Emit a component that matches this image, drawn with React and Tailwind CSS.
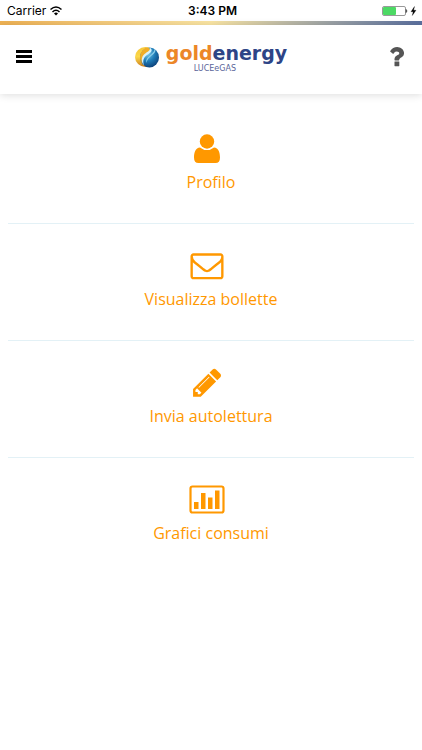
import React from "react";

function WifiIcon() {
  return (
    <svg className="h-3 w-3" viewBox="0 0 24 22" fill="none" stroke="#000" strokeWidth="3" aria-hidden="true">
      <path d="M1 8Q12-2 23 8M5 13Q12 6 19 13" />
      <path d="M8 16Q12 12 16 16L12 20Z" fill="#000" stroke="none" />
    </svg>
  );
}

function BatteryIcon() {
  return (
    <svg className="h-3 w-9" viewBox="0 0 36 12" aria-hidden="true">
      <rect x="0.5" y="1.5" width="23" height="9" rx="1.5" fill="#fff" stroke="#999" />
      <rect x="1" y="2" width="13" height="8" rx="1" fill="#4cd964" />
      <path d="M24 4.5q2 1.5 0 3z" fill="#555" stroke="#555" />
      <path d="M32.500 1.500L29 6.700h2.200L30.300 10.500L34 5.300h-2.400z" fill="#000" stroke="#000" strokeWidth="0.3" />
    </svg>
  );
}

function StatusBar() {
  return (
    <div className="grid h-[21px] grid-cols-3 items-center pt-px pr-1 pl-[7px] font-['Inter',sans-serif] text-xs leading-4 text-black">
      <div className="flex items-center gap-1">
        <span>Carrier</span>
        <WifiIcon />
      </div>
      <div className="text-center font-semibold">3:43 PM</div>
      <div className="flex justify-end">
        <BatteryIcon />
      </div>
    </div>
  );
}

function Globe() {
  return (
    <svg className="h-6 w-6" viewBox="0 0 24 24" aria-hidden="true">
      <defs>
        <linearGradient id="sun" x1="0.4" y1="0" x2="0.5" y2="1">
          <stop offset="0" stopColor="#f6c638" />
          <stop offset="0.45" stopColor="#fbd84a" />
          <stop offset="1" stopColor="#c9781a" />
        </linearGradient>
        <radialGradient id="sea" cx="0.4" cy="0.3" r="0.75">
          <stop offset="0" stopColor="#7fcdea" />
          <stop offset="0.5" stopColor="#1f7db8" />
          <stop offset="1" stopColor="#0b3c74" />
        </radialGradient>
      </defs>
      <ellipse cx="10.500" cy="12" rx="10.500" ry="10" fill="url(#sun)" />
      <ellipse cx="14.500" cy="12.500" rx="9.500" ry="10" fill="url(#sea)" />
      <path d="M12 2.500C16 3 16 6 12 8.500C8 11 6 14 7 18.500C4.500 15 4.500 10 6.500 7C8 4.500 10 3 12 2.500Z" fill="#f0ad26" />
      <path d="M14.500 2.500C19 5 15.500 8 12 10C8.500 12.500 7.500 16 9 20.500C6 17 6 12 9.500 9C12.500 6.500 16 5.500 14.500 2.500Z" fill="#d9f1f8" />
      <path d="M20.500 5C20.500 10 12.500 11 11.500 18C9.500 11.500 19.500 9.500 19.500 4Z" fill="#8cd0ea" />
    </svg>
  );
}

function Logo() {
  return (
    <a href="#home" aria-label="goldenergy LUCEeGAS" className="flex items-center gap-[7px]">
      <Globe />
      <span className="flex flex-col items-start font-['DejaVu_Sans',sans-serif]">
        <span className="text-[19px] leading-6 font-bold text-[#2d4486]">
          <span className="text-[#ec8727]">gold</span>energy
        </span>
        <span className="pl-7 text-[8px] leading-2 text-[#5a6499]">LUCEeGAS</span>
      </span>
    </a>
  );
}

function Header() {
  return (
    <header className="flex h-[69px] items-center justify-between bg-white px-4 pb-[5px] shadow-[0_1px_8px_rgba(0,0,0,0.14)]">
      <button type="button" aria-label="Menu" className="flex h-8 w-8 items-center">
        <svg className="h-4 w-4" viewBox="0 0 16 16" aria-hidden="true">
          <path d="M0 1h16v3H0zM0 6h16v3H0zM0 11h16v3H0z" fill="#000" />
        </svg>
      </button>
      <Logo />
      <button type="button" aria-label="Aiuto" className="flex h-8 w-8 items-center justify-end">
        <svg className="h-6 w-5" viewBox="328 120 1080 1600" aria-hidden="true">
          <path
            fill="#555"
            d="M1088 1256v240q0 16-12 28t-28 12h-240q-16 0-28-12t-12-28v-240q0-16 12-28t28-12h240q16 0 28 12t12 28zm316-600q0 54-15.500 101t-35 76.500-55 59.500-57.500 43.500-61 35.500q-41 23-68.500 65t-27.500 67q0 17-12 32.500t-28 15.500h-240q-15 0-25.500-18.500t-10.500-37.500v-45q0-83 65-156.500t143-108.500q59-27 84-56t25-76q0-42-46.500-74t-107.500-32q-65 0-108 29-35 25-107 115-13 16-31 16-12 0-25-8l-164-125q-13-10-15.500-25t5.500-28q160-266 464-266 80 0 161 31t146 83 106 127.500 41 158.500z"
          />
        </svg>
      </button>
    </header>
  );
}

function UserIcon() {
  return (
    <svg className="h-8 w-9" viewBox="0 2 36 32" fill="currentColor" aria-hidden="true">
      <circle cx="18" cy="9.500" r="7.200" />
      <path d="M11 15.400C6.500 15.500 5 20.500 5 25.500Q5 31 9.500 31H26.500Q31 31 31 25.500C31 20.500 29.500 15.500 25 15.400Q18 20.800 11 15.400Z" />
    </svg>
  );
}

function EnvelopeIcon() {
  return (
    <svg className="h-8 w-9" viewBox="-80 128 1952 1736" fill="currentColor" aria-hidden="true">
      <path d="M1664 1504v-768q-32 36-69 66-268 206-426 338-51 43-83 67t-86.500 48.500-102.500 24.500h-2q-48 0-102.500-24.500t-86.500-48.500-83-67q-158-132-426-338-37-30-69-66v768q0 13 9.500 22.500t22.500 9.500h1472q13 0 22.500-9.500t9.500-22.500zm0-1051v-24.500l-.5-13-3-12.500-5.500-9-9-7.500-14-2.500h-1472q-13 0-22.500 9.500t-9.500 22.500q0 168 147 284 193 152 401 317 6 5 35 29.500t46 37.500 44.500 31.500 50.500 27.500 43 9h2q20 0 43-9t50.500-27.500 44.500-31.500 46-37.500 35-29.500q208-165 401-317 54-43 100.500-115.500t46.500-131.500zm128-37v1088q0 66-47 113t-113 47h-1472q-66 0-113-47t-47-113v-1088q0-66 47-113t113-47h1472q66 0 113 47t47 113z" />
    </svg>
  );
}

function PencilIcon() {
  return (
    <svg className="h-8 w-9" viewBox="-92 134 1952 1680" fill="currentColor" aria-hidden="true">
      <path d="M491 1536l91-91-235-235-91 91v107h128v128h107zm523-928q0-22-22-22-10 0-17 7l-542 542q-7 7-7 17 0 22 22 22 10 0 17-7l542-542q7-7 7-17zm-54-192l416 416-832 832h-416v-416zm683 96q0 53-37 90l-166 166-416-416 166-165q36-38 90-38 53 0 91 38l235 234q37 39 37 91z" />
    </svg>
  );
}

function ChartIcon() {
  return (
    <svg className="h-8 w-9" viewBox="0 2 36 32" fill="currentColor" aria-hidden="true">
      <rect x="1.500" y="3.500" width="33" height="26" rx="2" fill="none" stroke="currentColor" strokeWidth="2.200" />
      <path d="M5 19h4.500v7H5zM12 10h4.500v16H12zM19 14.500h4.500V26H19zM26 7.500h4.500V26H26z" />
    </svg>
  );
}

const items = [
  { label: "Profilo", href: "#profilo", Icon: UserIcon },
  { label: "Visualizza bollette", href: "#bollette", Icon: EnvelopeIcon },
  { label: "Invia autolettura", href: "#autolettura", Icon: PencilIcon },
  { label: "Grafici consumi", href: "#consumi", Icon: ChartIcon },
];

export default function App() {
  return (
    <div className="min-h-screen bg-white">
      <StatusBar />
      <div className="h-1 bg-linear-to-r from-[#efb253] via-[#fbe6a4] to-[#5a6f9e]" />
      <Header />
      <nav className="mx-2 mt-[13px]">
        <ul className="divide-y divide-[#e3f1f6]">
          {items.map(({ label, href, Icon }) => (
            <li key={label}>
              <a href={href} className="flex h-[116px] flex-col items-center pt-[27px] text-[#ff9800]">
                <span className="mr-2">
                  <Icon />
                </span>
                <span className="mt-1 font-['Open_Sans',sans-serif] text-base leading-6">{label}</span>
              </a>
            </li>
          ))}
        </ul>
      </nav>
    </div>
  );
}
